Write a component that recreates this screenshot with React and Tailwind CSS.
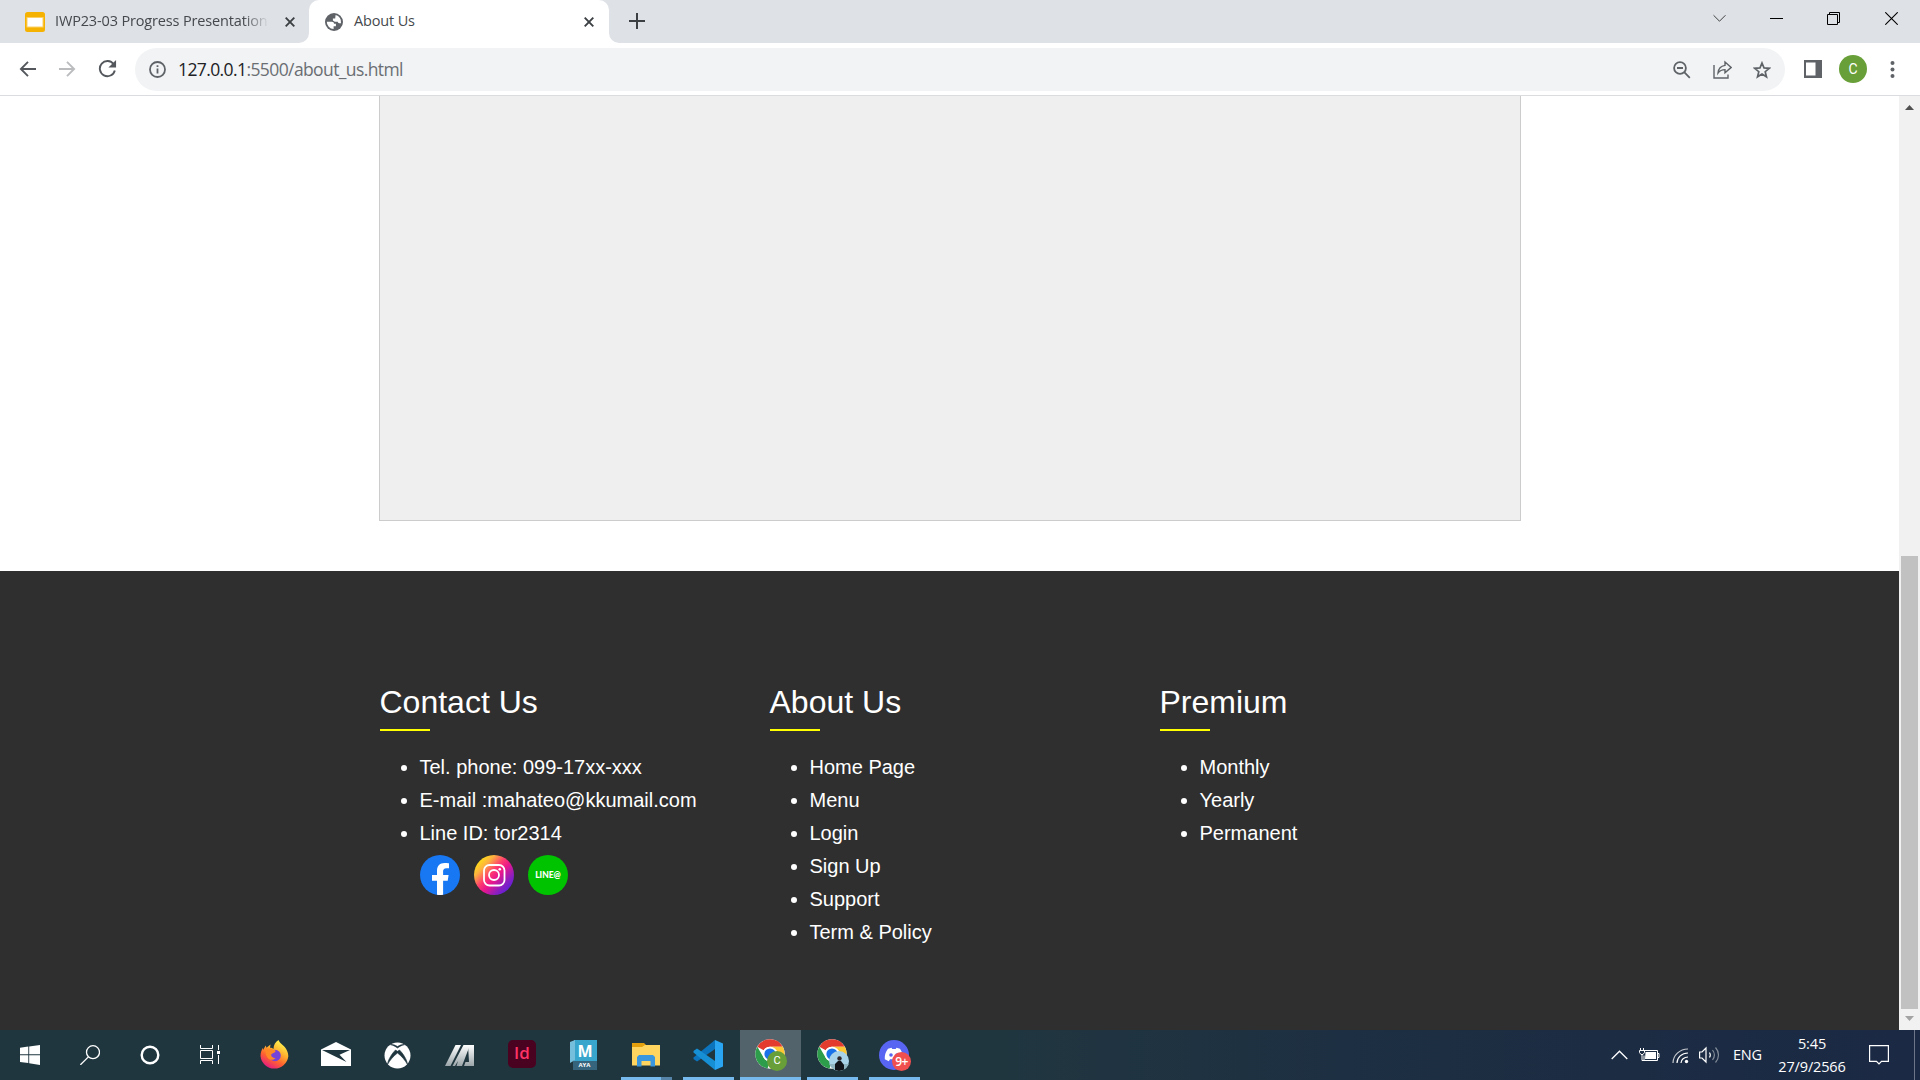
import React from "react";

const ui = "font-['Open_Sans','Noto_Sans',sans-serif]";

function Slides() {
  return (
    <svg width="20" height="20" viewBox="0 0 20 20">
      <rect width="20" height="20" rx="2.5" fill="#f6b200" />
      <rect x="2" y="5.500" width="16" height="9.500" fill="#fff" stroke="#fbd069" />
    </svg>
  );
}

function Close() {
  return (
    <svg width="10" height="10" viewBox="0 0 10 10" stroke="#3c4043" strokeWidth="1.900">
      <path d="M.7.700l8.600 8.600M9.300.700L.700 9.300" />
    </svg>
  );
}

function Globe() {
  return (
    <svg width="18" height="18" viewBox="0 0 18 18">
      <circle cx="9" cy="9" r="9" fill="#5f6368" />
      <path d="M1.800 8.700h5c1.600 0 2.200.9 2.200 2.100h1.900v2.400H8.600v2.900A7.200 7.200 0 0 1 1.800 8.700z" fill="#fff" />
      <path d="M10.600 2A7.200 7.200 0 0 1 16 10.200c-1.500.3-2.900 0-3.300-1.500H9.800L7.900 7.400V5.600h2.300z" fill="#fff" />
    </svg>
  );
}

function TabStrip() {
  return (
    <div className="flex h-[43px] shrink-0 bg-[#dee1e6]">
      <div className="flex w-[309px] items-center pl-[25px]">
        <Slides />
        <div className="mt-[-2px] ml-[10px] w-[214px] overflow-hidden whitespace-nowrap text-[14.5px] tracking-[-0.15px] text-[#45494d] [mask-image:linear-gradient(to_right,black_88%,transparent)]">IWP23-03 Progress Presentation</div>
        <div className="ml-[16px]"><Close /></div>
      </div>
      <div className="relative flex w-[300px] items-center rounded-t-[10px] bg-white pl-[16px]">
        <svg className="absolute bottom-0 -left-[10px]" width="10" height="10"><path d="M10 0v10H0A10 10 0 0 0 10 0z" fill="#fff" /></svg>
        <svg className="absolute bottom-0 -right-[10px]" width="10" height="10"><path d="M0 0v10h10A10 10 0 0 1 0 0z" fill="#fff" /></svg>
        <Globe />
        <div className="mt-[-2px] ml-[11px] w-[220px] text-[14.5px] tracking-[-0.15px] text-[#45494d]">About Us</div>
        <div className="ml-[10px]"><Close /></div>
      </div>
      <div className="flex flex-1 items-center pl-[20px]">
        <svg className="mt-[-1px]" width="16" height="16" viewBox="0 0 16 16" stroke="#3c4043" strokeWidth="2"><path d="M8 0v16M0 8h16" /></svg>
      </div>
      <div className="flex items-start pt-[12px] pr-[22px]">
        <svg className="mr-[44px]" width="13" height="13" viewBox="0 0 14 14" fill="none" stroke="#333" strokeWidth="1"><path d="M.6 3.500L7 9.900l6.400-6.400" /></svg>
        <svg className="mr-[44px]" width="13" height="14" viewBox="0 0 13 14" stroke="#000"><path d="M0 6.500h13" /></svg>
        <svg className="mr-[45px]" width="13" height="13" viewBox="0 0 13 13" fill="none" stroke="#000"><path d="M.5 2.500h10v10H.5zM2.500 2.500v-2h10v10h-2" /></svg>
        <svg width="13" height="13" viewBox="0 0 13 13" stroke="#000" strokeWidth="1.100"><path d="M.3.300l12.400 12.400M12.700.300L.300 12.700" /></svg>
      </div>
    </div>
  );
}

function Toolbar() {
  return (
    <div className="flex h-[53px] shrink-0 items-start border-b border-[#dadce0] bg-white">
      <div className="flex h-[50px] w-[135px] items-center pl-[19px] pt-[1px]">
        <svg width="17" height="16" viewBox="0 0 17 16" fill="none" stroke="#54585d" strokeWidth="1.900"><path d="M17 8H2M9 .900L1.900 8 9 15.100" /></svg>
        <svg className="ml-[23px]" width="17" height="16" viewBox="0 0 17 16" fill="none" stroke="#babcbe" strokeWidth="1.900"><path d="M0 8h15M8 .900L15.100 8 8 15.100" /></svg>
        <svg className="ml-[22px]" width="19" height="19" viewBox="0 0 20 20" fill="none" stroke="#54585d" strokeWidth="2"><path d="M16.500 5.500A8 8 0 1 0 17.700 12" /><path d="M19 1v8h-8z" fill="#54585d" stroke="none" /></svg>
      </div>
      <div className="mt-[5px] flex h-[43px] w-[1650px] items-center rounded-full bg-[#f1f3f4] pr-[14px] pl-[14px]">
        <svg width="17" height="17" viewBox="0 0 17 17" fill="none" stroke="#5f6368" strokeWidth="1.800"><circle cx="8.500" cy="8.500" r="7.500" /><path d="M8.500 7.500v5M8.500 4.200v1.900" /></svg>
        <div className="mt-[-2px] ml-[12px] flex-1 text-[17.5px] leading-[24px] tracking-[-0.6px] text-[#6a6e73]"><span className="text-[#202124]">127.0.0.1</span>:5500/about_us.html</div>
        <svg width="18" height="18" viewBox="0 0 18 18" fill="none" stroke="#5f6368" strokeWidth="1.800"><circle cx="7" cy="7" r="5.900" /><path d="M11.200 11.200l5.600 5.600M4 7h6" /></svg>
        <svg className="ml-[22px]" width="19" height="19" viewBox="0 0 19 19" fill="none" stroke="#5f6368" strokeWidth="1.400"><path d="M1 5v13h14v-3.500" /><path d="M12 2l6.200 5.400L12 12.800V9.600c-3 0-5.200 1-7 3.400.4-4.200 2.800-7 7-7.600z" /></svg>
        <svg className="ml-[21px]" width="18" height="18" viewBox="0 0 18 18" fill="none" stroke="#5f6368" strokeWidth="1.700"><path d="M9 2l2 4.900 5.200.4-4 3.400 1.300 5.100L9 13l-4.500 2.800 1.300-5.100-4-3.400L7 6.900z" /></svg>
      </div>
      <div className="flex h-[52px] flex-1 items-center pl-[19px]">
        <svg width="18" height="18" viewBox="0 0 18 18"><path d="M0 0h18v18H0z" fill="#5f6368" /><path d="M2 2.500h9.500v13H2z" fill="#fff" /></svg>
        <div className="mt-[-1px] ml-[17px] flex size-[28px] items-center justify-center rounded-full pt-[1px] bg-[#689f38] font-['Roboto',sans-serif] text-[14px] text-white">C</div>
        <svg className="ml-[23px]" width="5" height="17" viewBox="0 0 5 17" fill="#5f6368"><circle cx="2.500" cy="2" r="2" /><circle cx="2.500" cy="8.500" r="2" /><circle cx="2.500" cy="15" r="2" /></svg>
      </div>
    </div>
  );
}

function Socials() {
  return (
    <div className="mt-[5px] ml-[40px] flex gap-[14px]">
      <svg width="40" height="40" viewBox="0 0 40 40"><circle cx="20" cy="20" r="20" fill="#1877f2" /><path d="M17 39.800V25.800h-5V20h5v-4.400c0-5 3-7.700 7.500-7.700 1.500 0 3.500.2 4.500.4v5h-2.600c-2.500 0-3.300 1.500-3.300 3.100V20h5.500l-.9 5.800h-4.600v14a20 20 0 0 1-6.100 0z" fill="#fff" /></svg>
      <svg width="40" height="40" viewBox="0 0 40 40" fill="none">
        <defs><linearGradient id="ig" x1="4" y1="5" x2="36" y2="35" gradientUnits="userSpaceOnUse"><stop offset="0" stopColor="#fee411" /><stop offset=".2" stopColor="#fdb140" /><stop offset=".42" stopColor="#fe3a6f" /><stop offset=".58" stopColor="#e9168c" /><stop offset=".82" stopColor="#8a1fc0" /><stop offset="1" stopColor="#5a1fdd" /></linearGradient></defs>
        <circle cx="20" cy="20" r="20" fill="url(#ig)" /><rect x="10" y="10" width="20.500" height="20.500" rx="5.500" stroke="#fff" strokeWidth="1.800" /><circle cx="20" cy="20" r="5" stroke="#fff" strokeWidth="1.800" /><circle cx="25.800" cy="14.200" r="1.300" fill="#fff" />
      </svg>
      <div className="flex size-[40px] items-center justify-center rounded-full bg-[#00c300] font-['Lato',sans-serif] text-[8.5px] font-black text-white"><span>LINE@</span></div>
    </div>
  );
}

function Column({ title, items, children }) {
  return (
    <div className="w-[390px]">
      <h4 className="ml-[-0.5px] text-[32px] leading-[38px]">{title}</h4>
      <div className="mt-[8px] h-[2px] w-[50px] bg-[#ff0]" />
      <ul className="mt-[20px] ml-[-0.5px] list-disc pl-[40px] text-[20px] leading-[33px]">
        {items.map((t) => <li key={t}>{t}</li>)}
      </ul>
      {children}
    </div>
  );
}

function Page() {
  return (
    <div className="flex min-h-0 flex-1">
      <div className="flex w-[1899px] flex-col bg-white">
        <div className="ml-[379px] h-[425px] w-[1142px] border border-t-0 border-[#ccc] bg-[#efefef]" />
        <div className="mt-[50px] flex flex-1 bg-[#2f2f2f] pt-[112px] pl-[380px] font-['Liberation_Sans',Arial,sans-serif] text-white">
          <Column title="Contact Us" items={["Tel. phone: 099-17xx-xxx", "E-mail :mahateo@kkumail.com", "Line ID: tor2314"]}><Socials /></Column>
          <Column title="About Us" items={["Home Page", "Menu", "Login", "Sign Up", "Support", "Term & Policy"]} />
          <Column title="Premium" items={["Monthly", "Yearly", "Permanent"]} />
        </div>
      </div>
      <div className="flex w-[21px] flex-col items-center bg-[#f1f1f1]">
        <svg className="mt-[9px]" width="9" height="5" viewBox="0 0 9 5"><path d="M4.500 0L9 5H0z" fill="#505050" /></svg>
        <div className="mt-[446px] h-[453px] w-[17px] bg-[#c1c1c1]" />
        <svg className="mt-[7px]" width="9" height="5" viewBox="0 0 9 5"><path d="M0 0h9L4.500 5z" fill="#a3a3a3" /></svg>
      </div>
    </div>
  );
}

function Chrome({ children }) {
  return (
    <div className="relative ml-[1px] size-[32px]">
      <svg width="30" height="30" viewBox="0 0 48 48">
        <circle cx="24" cy="24" r="23.500" fill="#fff" />
        <path d="M24 .5A23.500 23.500 0 0 1 44.400 12.300H24A11.700 11.700 0 0 0 13.900 18L3.700 12.200A23.500 23.500 0 0 1 24 .5z" fill="#e33b2e" />
        <path d="M3.700 12.200L13.900 29.900A11.700 11.700 0 0 0 24 35.700L20 47.200A23.500 23.500 0 0 1 3.700 12.200z" fill="#2d9d4b" />
        <path d="M44.400 12.300A23.500 23.500 0 0 1 24 47.500L34.200 29.900A11.700 11.700 0 0 0 34.200 18L24 12.300z" fill="#fcc934" />
        <circle cx="24" cy="24" r="11.700" fill="#fff" /><circle cx="24" cy="24" r="9" fill="#1a73e8" />
      </svg>
      <div className="absolute top-[12px] left-[12px] flex size-[20px] items-center justify-center overflow-hidden rounded-full">{children}</div>
    </div>
  );
}

function TaskItem({ w, bar, active, children }) {
  return (
    <div className={active ? "relative flex h-[50px] shrink-0 items-center justify-center bg-[#53636b]" : "relative flex h-[50px] shrink-0 items-center justify-center"} style={{ width: w }}>
      {children}
      {bar && <div className={active ? "absolute bottom-0 h-[3px] w-full bg-[#76b9ed]" : "absolute bottom-0 h-[3px] w-[51px] bg-[#76b9ed]"} />}
    </div>
  );
}

function Taskbar() {
  return (
    <div className="flex h-[50px] shrink-0 items-center bg-[linear-gradient(90deg,#20363f_0%,#20363f_52%,#1d2f42_70%,#1b2944_100%)]">
      <TaskItem w={60}><svg width="20" height="20" viewBox="0 0 20 20" fill="#fff"><path d="M0 2.800L8.300 1.600v7.700H0zM9.200 1.500L20 0v9.300H9.200zM0 10.300h8.300V18L0 16.900zM9.200 10.300H20v9.600L9.200 18.200z" /></svg></TaskItem>
      <TaskItem w={60}><svg width="20" height="20" viewBox="0 0 20 20" fill="none" stroke="#fff" strokeWidth="1.300"><circle cx="13" cy="7.200" r="6.500" /><path d="M8.400 11.900L.4 19.800" /></svg></TaskItem>
      <TaskItem w={60}><svg width="20" height="20" viewBox="0 0 20 20" fill="none" stroke="#fff" strokeWidth="2.400"><circle cx="10" cy="10" r="8.300" /></svg></TaskItem>
      <TaskItem w={60}><svg width="20" height="20" viewBox="0 0 20 20" fill="none" stroke="#fff"><path d="M.5 0v3.500h12V0M.5 19v-3.500h12V19M.5 5.500h12v8H.500zM18.500 0v5M18.500 10v9" /><path d="M17 6h3v3h-3z" fill="#fff" stroke="none" /></svg></TaskItem>
      <TaskItem w={68}>
        <svg className="mt-[-1px]" width="29" height="30" viewBox="0 0 29 30">
          <defs><linearGradient id="ff" x1="22" y1="2" x2="7" y2="28" gradientUnits="userSpaceOnUse"><stop offset="0" stopColor="#fff44f" /><stop offset=".35" stopColor="#ffb02e" /><stop offset=".65" stopColor="#ff6230" /><stop offset="1" stopColor="#e31587" /></linearGradient></defs>
          <path d="M18.500 0c1.400 3.700 5.500 5 7.800 9.300 1.500 2.600 2 5.200 2 7.200A14 14 0 0 1 .5 16c0-3.300 1-6.300 2.500-8.300V10l2.700-4.500.8 2.300 4-3.200-.5 3.200c1.500 0 2.600.5 3.500 1.300.1-4 1.700-7 5-9.100z" fill="url(#ff)" />
          <circle cx="15" cy="15.500" r="5.800" fill="#7543d8" /><path d="M5 8.500c3 0 6-.5 9 1.500 2 0 2 1.500.5 2.500l-3 1.500c-1 2 1 4 4 4-3 4-9 1-9.500-4z" fill="#ff8a25" />
        </svg>
      </TaskItem>
      <TaskItem w={56}><svg className="mt-[-2px]" width="30" height="24" viewBox="0 0 30 24"><path d="M0 7.500L15 0l15 7.500V24H0z" fill="#fff" /><path d="M1 8h28l-10.500 4.700 7 7.300L1 8z" fill="#20363f" /></svg></TaskItem>
      <TaskItem w={68}><svg className="ml-[-1px]" width="27" height="27" viewBox="0 0 27 27"><circle cx="13.500" cy="13.500" r="13" fill="#fff" /><path d="M6.500 2.700c2.500-.6 4.800.5 7 1.900 2.200-1.400 4.500-2.500 7-1.900-2.500.3-4.800 1.700-7 3.300C11.300 4.400 9 3 6.500 2.700zM3.500 22.500c.5-5 4.500-11 8-14.500l2 1.300 2-1.300c3.500 3.500 7.500 9.500 8 14.500-2.500-4.500-6-8.500-10-11.500-4 3-7.500 7-10 11.500z" fill="#20363f" stroke="#20363f" strokeWidth=".6" /></svg></TaskItem>
      <TaskItem w={56}><svg className="ml-[-1px]" width="29" height="21" viewBox="0 0 29 21"><defs><linearGradient id="ma" x1="0" y1="0" x2="0" y2="1"><stop stopColor="#fff" /><stop offset="1" stopColor="#9ba5a9" /></linearGradient></defs><path d="M10.500 0H16L5.500 21H0zM18.500 0H25L17 21h-5.500l1.500-5L10 21H7.500z" fill="url(#ma)" /><path d="M23 0h6v21H19l1.500-4H24z" fill="url(#ma)" /></svg></TaskItem>
      <TaskItem w={68}><div className="mt-[-2px] flex size-[28px] items-center justify-center rounded-[5px] bg-[#49021f] font-['Open_Sans',sans-serif] text-[17px] font-semibold text-[#ff3366]"><span className="mt-[-2px]">Id</span></div></TaskItem>
      <TaskItem w={56}>
        <div className="relative mr-[2px] flex h-[30px] w-[27px] flex-col pl-[3px]">
          <svg className="absolute top-0 left-0" width="5" height="24"><path d="M5 0v20L0 23V2z" fill="#76bfdc" /></svg>
          <div className="ml-[1px] flex h-[21px] items-center justify-center bg-[#38a5cc] text-[16px] font-bold text-white"><span>M</span></div>
          <div className="flex h-[9px] items-center justify-center bg-[#35647c] text-[6px] font-bold text-white">AYA</div>
        </div>
      </TaskItem>
      <TaskItem w={68} bar>
        <svg className="ml-[-1px]" width="28" height="24" viewBox="0 0 28 24"><path d="M0 0h12l2 2v5H0z" fill="#e5a00d" /><path d="M0 4h10l3-2h15v20.500H0z" fill="#ffd560" /><path d="M5 23.500V14l2-2h14l2 2v9.500h-4.500V18h-9v5.500z" fill="#3a97dd" /></svg>
        <div className="absolute right-[8px] bottom-0 z-10 h-[3px] w-[11px] bg-[#5684a8]" />
      </TaskItem>
      <TaskItem w={56} bar><svg width="30" height="30" viewBox="0 0 30 30"><path d="M22 0v9L4 21.500l-3.500-2.500V17.500z" fill="#0b74bd" /><path d="M22 30v-9L4 8.500.5 11v1.500z" fill="#168fd5" /><path d="M22 0l8 3.500v23L22 30z" fill="#29a5f1" /></svg></TaskItem>
      <TaskItem w={4} />
      <TaskItem w={61} bar active><Chrome><div className="flex size-[20px] items-center justify-center bg-[#689f38] font-['Roboto',sans-serif] text-[11px] text-white">C</div></Chrome></TaskItem>
      <TaskItem w={63} bar><Chrome><svg width="20" height="20" viewBox="0 0 20 20"><path d="M0 0h20v20H0z" fill="#a9d3e8" /><path d="M0 13h20v7H0z" fill="#8fb5c2" /><path d="M6 20v-7l3-3h3l3 4v6z" fill="#11151b" /><circle cx="10.500" cy="7.500" r="2.200" fill="#30282a" /></svg></Chrome></TaskItem>
      <TaskItem w={61} bar>
        <div className="relative mr-[1px] size-[30px]">
          <svg width="30" height="30" viewBox="0 0 30 30"><circle cx="15" cy="15" r="15" fill="#5865f2" /><path d="M9 8.800l3.500-1.100.8 1.300h3.400l.8-1.300L21 8.800c2.500 3.500 3.500 7 3.200 10.500l-4 2-1.200-2h-8l-1.200 2-4-2C5.500 15.500 6.500 12 9 8.800z" fill="#fff" /><circle cx="12" cy="15" r="1.800" fill="#5865f2" /><circle cx="18" cy="15" r="1.800" fill="#5865f2" /></svg>
          <div className="absolute top-[12px] left-[13px] flex size-[19px] items-center justify-center rounded-full bg-[#f04f50] text-[12px] font-semibold tracking-[-0.5px] text-white">9+</div>
        </div>
      </TaskItem>
      <div className="flex h-full flex-1 items-center justify-end text-white">
        <svg width="17" height="10" viewBox="0 0 17 10" fill="none" stroke="#fff" strokeWidth="1.300"><path d="M.7 9L8.500 1.200 16.300 9" /></svg>
        <svg className="ml-[11px]" width="21" height="15" viewBox="0 0 21 15" fill="none" stroke="#fff"><path d="M5 2.500h13.500v10H5v-5M19 5.500h1v4h-1" /><path d="M6.500 4h10.500v7h-11z" fill="#fff" stroke="none" /><path d="M1.500 0v2M4.500 0v2M.5 2.500h5v2l-1.500 2H2l-1.500-2zM3 6.500v6h2" /></svg>
        <svg className="mt-[2px] ml-[12px]" width="17" height="16" viewBox="0 0 17 16" fill="none" stroke="#fff" strokeWidth="1.200"><path d="M1 15A15 14 0 0 1 16 1" opacity=".75" /><path d="M5 15A11 10 0 0 1 16 5M9 15a7 6 0 0 1 7-6" /><circle cx="14.500" cy="13.500" r="1.700" fill="#fff" stroke="none" /></svg>
        <svg className="ml-[10px]" width="21" height="18" viewBox="0 0 21 18" fill="none" stroke="#fff" strokeWidth="1.200"><path d="M.6 6H3l4-4v14l-4-4H.6z" /><path d="M10.500 6.500c1 1.500 1 3.500 0 5" /><path d="M13.500 4c2.300 3 2.300 7 0 10M16.500 1.500c4 4.500 4 10.500 0 15" opacity=".45" /></svg>
        <div className="mt-[-1px] ml-[13px] w-[30px] text-[14.5px] tracking-[-0.2px]">ENG</div>
        <div className="mt-[-1px] ml-[11px] w-[76px] text-center text-[14.5px] leading-[23px] tracking-[-0.15px] whitespace-nowrap"><div>5:45</div><div>27/9/2566</div></div>
        <svg className="ml-[19px]" width="20" height="20" viewBox="0 0 20 20" fill="none" stroke="#fff" strokeWidth="1.200"><path d="M.6.600h18.800v15.800H12.500L10 19l-2.500-2.600H.6z" /></svg>
        <div className="ml-[25px] h-full w-[6px] border-l border-[#6d7588]" />
      </div>
    </div>
  );
}

export default function App() {
  return (
    <div className={`${ui} flex h-[1080px] w-[1920px] flex-col overflow-hidden`}>
      <TabStrip />
      <Toolbar />
      <Page />
      <Taskbar />
    </div>
  );
}
